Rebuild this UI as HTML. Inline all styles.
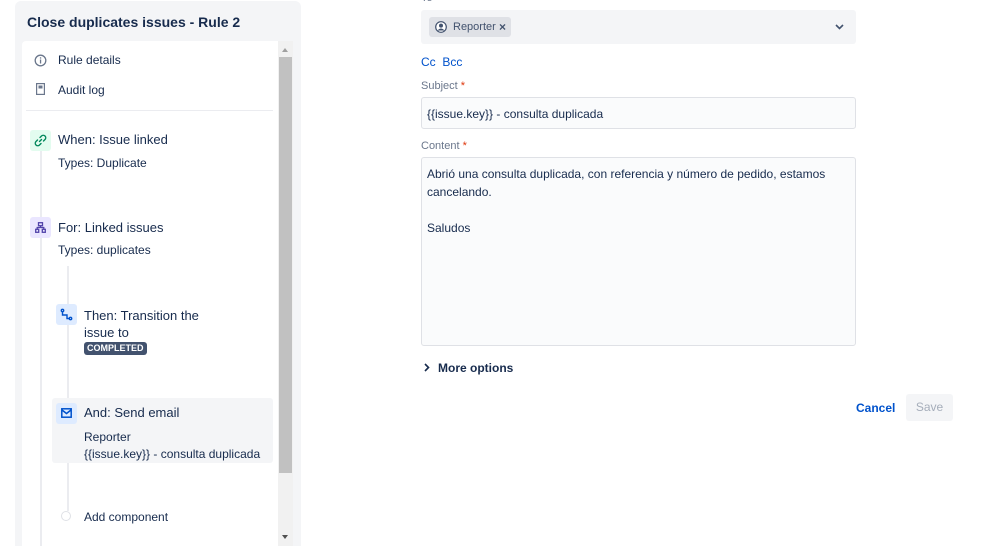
<!DOCTYPE html><html><head><style>
html,body{margin:0;width:999px;height:546px;overflow:hidden}
body{background:#fff;font-family:"Liberation Sans",sans-serif;color:#172b4d;position:relative;font-size:12px}
.a{position:absolute}
</style></head><body>
<div class="a" style="left:15px;top:1px;width:286px;height:560px;background:#f4f5f7;border-radius:6px"></div>
<div class="a" style="left:27px;top:14px;font-size:14px;font-weight:bold;color:#172b4d">Close duplicates issues - Rule 2</div>
<div class="a" style="left:22px;top:41px;width:256px;height:520px;background:#fff;border-radius:4px 0 0 4px"></div>
<div class="a" style="left:278px;top:41px;width:15px;height:505px;background:#f1f1f1"></div>
<div class="a" style="left:279px;top:57px;width:13px;height:416px;background:#c1c1c1"></div>
<div class="a" style="left:282px;top:48px;width:0;height:0;border:3.5px solid transparent;border-bottom:4px solid #a0a0a0;border-top:0"></div>
<div class="a" style="left:282px;top:535px;width:0;height:0;border:3.5px solid transparent;border-top:4px solid #505050;border-bottom:0"></div>
<svg class="a" style="left:34px;top:54px" width="13" height="13" viewBox="0 0 13 13"><circle cx="6.5" cy="6.5" r="5.3" fill="none" stroke="#6b778c" stroke-width="1.3"/><rect x="5.9" y="5.5" width="1.3" height="4" fill="#6b778c"/><rect x="5.9" y="3.3" width="1.3" height="1.3" fill="#6b778c"/></svg>
<div class="a" style="left:58px;top:53px">Rule details</div>
<svg class="a" style="left:36px;top:83px" width="9" height="12" viewBox="0 0 9 12"><rect x="0.6" y="0.6" width="7.8" height="10.8" fill="none" stroke="#6b778c" stroke-width="1.2"/><rect x="2.5" y="2.5" width="4" height="3" fill="#6b778c"/></svg>
<div class="a" style="left:58px;top:83px">Audit log</div>
<div class="a" style="left:26px;top:110px;width:247px;height:1px;background:#ebecf0"></div>
<div class="a" style="left:40px;top:150px;width:2px;height:400px;background:#ebecf0"></div>
<div class="a" style="left:67px;top:266px;width:2px;height:245px;background:#ebecf0"></div>
<div class="a" style="left:30px;top:130px;width:21px;height:21px;background:#e3fcef;border-radius:3px"></div>
<svg class="a" style="left:34px;top:134px" width="13" height="13" viewBox="0 0 13 13" fill="none" stroke="#00875a" stroke-width="1.4" stroke-linecap="round"><path d="M5.5 7.5L7.5 5.5"/><path d="M6 3.5L7.5 2A2.1 2.1 0 0 1 11 5.5L9.5 7"/><path d="M7 9.5L5.5 11A2.1 2.1 0 0 1 2 7.5L3.5 6"/></svg>
<div class="a" style="left:58px;top:132px;font-size:13px">When: Issue linked</div>
<div class="a" style="left:58px;top:156px">Types: Duplicate</div>
<div class="a" style="left:30px;top:217px;width:21px;height:21px;background:#eae6ff;border-radius:3px"></div>
<svg class="a" style="left:35px;top:222px" width="11" height="11" viewBox="0 0 11 11" fill="none" stroke="#5243aa" stroke-width="1.3"><rect x="3.5" y="0.7" width="4" height="3"/><rect x="0.7" y="7.3" width="3" height="3"/><rect x="7.3" y="7.3" width="3" height="3"/><path d="M5.5 3.7V5.5M2.2 7.3V5.5H8.8V7.3"/></svg>
<div class="a" style="left:58px;top:220px;font-size:13px">For: Linked issues</div>
<div class="a" style="left:58px;top:243px">Types: duplicates</div>
<div class="a" style="left:56px;top:304px;width:21px;height:21px;background:#deebff;border-radius:3px"></div>
<svg class="a" style="left:60px;top:308px" width="13" height="13" viewBox="0 0 13 13" fill="none" stroke="#0052cc" stroke-width="1.4"><circle cx="2.5" cy="2.5" r="1.2"/><circle cx="10.5" cy="10.5" r="1.2"/><path d="M2.5 3.7V7H7V10.5H9.3"/></svg>
<div class="a" style="left:84px;top:307px;font-size:13px;line-height:17px">Then: Transition the<br>issue to</div>
<div class="a" style="left:84px;top:342px;height:13px;padding:0 3px;background:#42526e;color:#fff;font-size:9px;font-weight:bold;line-height:13px;border-radius:3px">COMPLETED</div>
<div class="a" style="left:52px;top:398px;width:221px;height:65px;background:#f4f5f7;border-radius:3px"></div>
<div class="a" style="left:56px;top:403px;width:21px;height:21px;background:#deebff;border-radius:3px"></div>
<svg class="a" style="left:61px;top:408px" width="11" height="10" viewBox="0 0 11 10" fill="none" stroke="#0052cc" stroke-width="1.5"><rect x="0.8" y="0.8" width="9.4" height="8.4"/><path d="M1 2L5.5 5.5L10 2"/></svg>
<div class="a" style="left:84px;top:405px;font-size:13px">And: Send email</div>
<div class="a" style="left:84px;top:429px;line-height:17px">Reporter<br>{{issue.key}} - consulta duplicada</div>
<div class="a" style="left:61px;top:511px;width:8px;height:8px;border:1.5px solid #dfe1e6;border-radius:50%;background:#fff"></div>
<div class="a" style="left:84px;top:510px">Add component</div>

<div class="a" style="left:421px;top:-8px;font-size:11px;color:#6b778c">To</div>
<div class="a" style="left:421px;top:10px;width:435px;height:34px;background:#f4f5f7;border-radius:3px"></div>
<div class="a" style="left:429px;top:17px;width:82px;height:20px;background:#dfe1e6;border-radius:3px"></div>
<svg class="a" style="left:435px;top:21px" width="12" height="12" viewBox="0 0 12 12"><circle cx="6" cy="6" r="5.3" fill="#fff" stroke="#42526e" stroke-width="1.2"/><circle cx="6" cy="4.6" r="2" fill="#42526e"/><path d="M2.5 9.5Q6 5.5 9.5 9.5" fill="#42526e"/></svg>
<div class="a" style="left:453px;top:21px;font-size:11px;color:#42526e">Reporter</div>
<div class="a" style="left:499px;top:20px;font-size:12px;font-weight:bold;color:#42526e">×</div>
<svg class="a" style="left:835px;top:24px" width="9" height="6" viewBox="0 0 9 6"><path d="M1 1L4.5 4.5L8 1" fill="none" stroke="#42526e" stroke-width="1.6"/></svg>
<div class="a" style="left:421px;top:55px;color:#0052cc">Cc&nbsp; Bcc</div>
<div class="a" style="left:421px;top:80px;font-size:11px;color:#6b778c">Subject<span style="color:#de350b"> *</span></div>
<div class="a" style="left:421px;top:97px;width:433px;height:30px;background:#fafbfc;border:1px solid #dfe1e6;border-radius:3px"></div>
<div class="a" style="left:427px;top:107px">{{issue.key}} - consulta duplicada</div>
<div class="a" style="left:421px;top:140px;font-size:11px;color:#6b778c">Content<span style="color:#de350b"> *</span></div>
<div class="a" style="left:421px;top:157px;width:433px;height:187px;background:#fafbfc;border:1px solid #dfe1e6;border-radius:3px"></div>
<div class="a" style="left:427px;top:165px;line-height:18px">Abrió una consulta duplicada, con referencia y número de pedido, estamos<br>cancelando.<br><br>Saludos</div>
<svg class="a" style="left:424px;top:363px" width="6" height="9" viewBox="0 0 6 9"><path d="M1 1L4.5 4.5L1 8" fill="none" stroke="#172b4d" stroke-width="1.6"/></svg>
<div class="a" style="left:438px;top:361px;font-weight:bold">More options</div>
<div class="a" style="left:856px;top:401px;color:#0052cc;font-weight:bold">Cancel</div>
<div class="a" style="left:906px;top:394px;width:47px;height:27px;background:#f4f5f7;border-radius:3px;color:#a5adba;text-align:center;line-height:27px">Save</div>
</body></html>
